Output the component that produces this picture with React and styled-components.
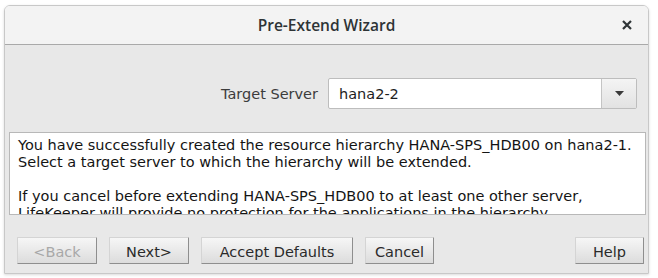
import React, { useState } from "react";
import styled, { createGlobalStyle } from "styled-components";

const GlobalStyle = createGlobalStyle`
  html, body {
    margin: 0;
    padding: 0;
    background: #ffffff;
  }
  body {
    font-family: "DejaVu Sans", "Liberation Sans", sans-serif;
  }
`;

const Screen = styled.div`
  width: 658px;
  height: 278px;
  padding: 5px 9px 4px 4px;
  box-sizing: border-box;
  display: flex;
`;

const Window = styled.div`
  flex: 1;
  display: flex;
  flex-direction: column;
  border: 1px solid #c8c8c8;
  border-radius: 6px 6px 0 0;
  box-shadow: 0 1px 3px rgba(0, 0, 0, 0.15);
  overflow: hidden;
`;

const TitleBar = styled.div`
  height: 38px;
  flex: none;
  background: #f3f3f3;
  border-bottom: 1px solid #a9a9a9;
  display: flex;
  align-items: center;
  justify-content: center;
  position: relative;
`;

const Title = styled.span`
  font-family: "Open Sans", "DejaVu Sans", sans-serif;
  font-weight: 600;
  font-size: 15.5px;
  color: #2e3436;
`;

const CloseButton = styled.button`
  position: absolute;
  right: 14px;
  top: 12px;
  width: 14px;
  height: 14px;
  padding: 0;
  border: none;
  background: transparent;
  display: flex;
  align-items: center;
  justify-content: center;
`;

const Body = styled.div`
  flex: 1;
  background: #e8e8e8;
  display: flex;
  flex-direction: column;
  padding: 33px 2px 0 4px;
`;

const ServerRow = styled.div`
  display: flex;
  align-items: center;
  justify-content: flex-end;
  gap: 10px;
  padding-right: 9px;
`;

const Label = styled.label`
  font-size: 14.5px;
  color: #3c3c3c;
`;

const Combo = styled.div`
  width: 309px;
  height: 31px;
  box-sizing: border-box;
  display: flex;
  border: 1px solid #bdbdbd;
  border-radius: 2px;
  background: #ffffff;
`;

const ComboValue = styled.div`
  flex: 1;
  display: flex;
  align-items: center;
  padding-left: 10px;
  font-size: 14.5px;
  color: #1e1e1e;
`;

const ComboArrow = styled.div`
  width: 34px;
  border-left: 1px solid #c4c4c4;
  background: linear-gradient(#f4f4f4, #e2e2e2);
  display: flex;
  align-items: center;
  justify-content: center;
`;

const Message = styled.div`
  margin-top: 23px;
  height: 83px;
  box-sizing: border-box;
  background: #ffffff;
  border: 1px solid #b8b8b8;
  padding: 4px 6px 0 8px;
  overflow: hidden;
  font-size: 14.5px;
  line-height: 17px;
  color: #141414;
  white-space: nowrap;
`;

const Para = styled.p`
  margin: 0 0 17px 0;
`;

const ButtonBar = styled.div`
  margin-top: 22px;
  display: flex;
  gap: 12px;
  padding: 0 2px 0 8px;
`;

const Button = styled.button`
  height: 27px;
  width: ${(p) => p.$w}px;
  margin-left: ${(p) => (p.$push ? "auto" : "0")};
  padding: 2px 0 0 0;
  font-family: "DejaVu Sans", sans-serif;
  font-size: 14.5px;
  color: ${(p) => (p.disabled ? "#a8a8a8" : "#2a2a2a")};
  background: linear-gradient(#f6f6f6, #dcdcdc);
  border: 1px solid #d4d4d4;
  border-right-color: #8e8e8e;
  border-bottom-color: #8e8e8e;
  border-radius: 1px;
`;

const App = () => {
  const [server] = useState("hana2-2");

  return (
    <Screen>
      <GlobalStyle />
      <Window>
        <TitleBar>
          <Title>Pre-Extend Wizard</Title>
          <CloseButton aria-label="Close">
            <svg width="10" height="10" viewBox="0 0 10 10">
              <path d="M1 1L9 9M9 1L1 9" stroke="#2e3436" strokeWidth="2.2" />
            </svg>
          </CloseButton>
        </TitleBar>
        <Body>
          <ServerRow>
            <Label>Target Server</Label>
            <Combo>
              <ComboValue>{server}</ComboValue>
              <ComboArrow>
                <svg width="9" height="5" viewBox="0 0 9 5">
                  <path d="M0 0H9L4.5 5Z" fill="#3a3a3a" />
                </svg>
              </ComboArrow>
            </Combo>
          </ServerRow>
          <Message>
            <Para>
              You have successfully created the resource hierarchy HANA-SPS_HDB00 on hana2-1.
              <br />
              Select a target server to which the hierarchy will be extended.
            </Para>
            <Para>
              If you cancel before extending HANA-SPS_HDB00 to at least one other server,
              <br />
              LifeKeeper will provide no protection for the applications in the hierarchy.
            </Para>
          </Message>
          <ButtonBar>
            <Button $w={80} disabled>
              &lt;Back
            </Button>
            <Button $w={80}>Next&gt;</Button>
            <Button $w={152}>Accept Defaults</Button>
            <Button $w={69}>Cancel</Button>
            <Button $w={69} $push>
              Help
            </Button>
          </ButtonBar>
        </Body>
      </Window>
    </Screen>
  );
};

export default App;
